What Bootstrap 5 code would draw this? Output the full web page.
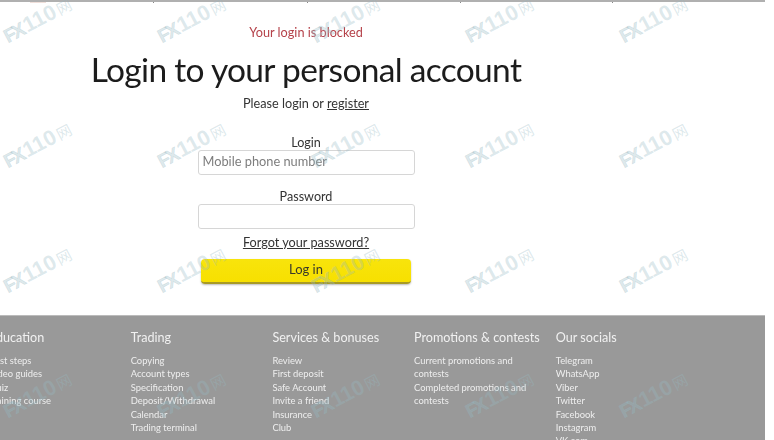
<!DOCTYPE html>
<html lang="en"><head><meta charset="utf-8">
<link rel="stylesheet" href="https://cdn.jsdelivr.net/npm/bootstrap@5.3.0/dist/css/bootstrap.min.css">
<style>
html,body{height:440px;overflow:hidden;background:#fff}
body{font-family:Lato,"Open Sans",sans-serif;color:#333;position:relative}
.pg{width:765px;height:440px;filter:blur(.35px)}
.topline{height:3px;border-top:2px solid #b0b0b0;background:linear-gradient(#888,#888) 153px 0/1px 2px no-repeat,linear-gradient(#888,#888) 307px 0/1px 2px no-repeat,linear-gradient(#888,#888) 460px 0/1px 2px no-repeat,linear-gradient(#888,#888) 612px 0/1px 2px no-repeat,linear-gradient(#edd9d3,#fff) 30px 0/16px 3px no-repeat}
.mainbox{width:612px;height:312px}
.blocked{font-size:12.7px;color:#b5424a;padding-top:21px;line-height:17px}
.ttl{font-size:33.5px;font-weight:400;color:#1c1c1c;margin:5px 0 0;line-height:46px;letter-spacing:-.68px}
.sub{font-size:12.7px;margin-top:3px;line-height:17px}
.sub a,.forgot{color:#333}
.lbl{font-size:12.6px;height:16px;line-height:18px;margin:0}
.lg{margin-top:22px}
.pw{margin-top:13px}
.fld{width:217px;height:25px;border:1px solid #d6d6d6;border-radius:3px;font-size:12.8px;padding:0 4px 4px;line-height:19px}
.fld::placeholder{color:#7d7d7d;opacity:1}
.forgot{font-size:12.7px;line-height:17px;margin-top:5px;display:block}
.gobtn{width:210px;height:25px;margin-top:8px;background:linear-gradient(#f8e40c,#f7e000);border:0;border-bottom:2px solid #a89a25;border-radius:4px;font-size:13px;color:#3a3a2a;line-height:19px;padding:0 0 3px;box-shadow:0 1px 2px #bbb}
.foot{height:125px;background:#999;color:#f1f1f1;padding-top:13px;border-top:1px solid #bbb}
.fcols{margin-left:-11px}
.fcol{width:141.7px;flex:none;padding-right:14px}
.fhead{font-size:12.6px;line-height:18px;margin-bottom:7px;font-weight:400;white-space:nowrap}
.flink{font-size:9.4px;line-height:13.4px;color:#eee}
.wms{position:absolute;inset:0;pointer-events:none;overflow:hidden}
.wm{position:absolute;display:flex;align-items:center;gap:1px;transform:rotate(-28deg);transform-origin:left center;color:rgba(150,185,195,.33);font-family:"Liberation Sans",sans-serif;font-weight:700;font-size:21.5px;line-height:1;white-space:nowrap}
.wm .cjk{font-family:"Noto Sans CJK SC",sans-serif;font-weight:400;font-size:15px;margin-left:1px}
.wm i{font-style:normal;font-size:19px;font-weight:700;letter-spacing:-2.5px;margin-right:2px;-webkit-text-stroke:.6px rgba(150,185,195,.33)}
</style></head><body>
<div class="pg">
<div class="topline"></div>
<div class="mainbox d-flex flex-column align-items-center text-center">
<div class="blocked">Your login is blocked</div>
<h1 class="ttl">Login to your personal account</h1>
<div class="sub">Please login or <a href="#">register</a></div>
<div class="lg d-flex flex-column align-items-center">
<label class="lbl">Login</label>
<input class="fld" placeholder="Mobile phone number">
</div>
<div class="pw d-flex flex-column align-items-center">
<label class="lbl">Password</label>
<input class="fld" type="password">
</div>
<a class="forgot" href="#">Forgot your password?</a>
<button class="gobtn">Log in</button>
</div>
<footer class="foot">
<div class="fcols d-flex">
<div class="fcol"><div class="fhead">Education</div><div class="flink"><div>First steps</div><div>Video guides</div><div>Quiz</div><div>Training course</div></div></div>
<div class="fcol"><div class="fhead">Trading</div><div class="flink"><div>Copying</div><div>Account types</div><div>Specification</div><div>Deposit/Withdrawal</div><div>Calendar</div><div>Trading terminal</div></div></div>
<div class="fcol"><div class="fhead">Services &amp; bonuses</div><div class="flink"><div>Review</div><div>First deposit</div><div>Safe Account</div><div>Invite a friend</div><div>Insurance</div><div>Club</div></div></div>
<div class="fcol"><div class="fhead">Promotions &amp; contests</div><div class="flink"><div>Current promotions and contests</div><div>Completed promotions and contests</div></div></div>
<div class="fcol"><div class="fhead">Our socials</div><div class="flink"><div>Telegram</div><div>WhatsApp</div><div>Viber</div><div>Twitter</div><div>Facebook</div><div>Instagram</div><div>VK.com</div></div></div>
</div>
</footer>
</div>
<div class="wms" id="w"></div>
<script src="https://cdn.jsdelivr.net/npm/bootstrap@5.3.0/dist/js/bootstrap.bundle.min.js"></script>
<script>
var w=document.getElementById('w'),h='';
[5,159,313,467,621].forEach(function(x){[38,163,288,413].forEach(function(y){
h+='<div class="wm" style="left:'+x+'px;top:'+(y-11)+'px"><i>FX</i>110<span class="cjk">网</span></div>';
});});
w.innerHTML=h;
</script>
</body></html>
